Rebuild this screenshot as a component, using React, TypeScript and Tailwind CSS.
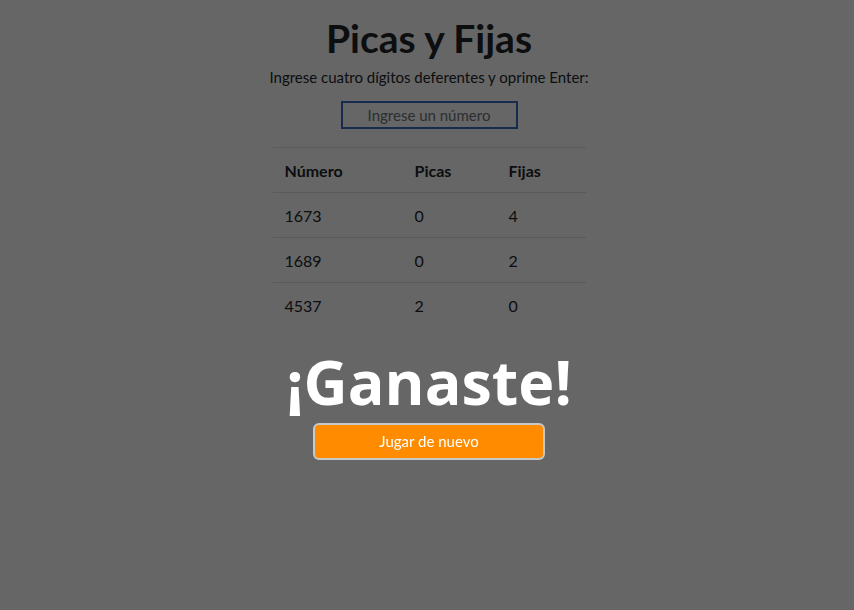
import React from "react";

interface Guess {
  numero: string;
  picas: number;
  fijas: number;
}

const guesses: Guess[] = [
  { numero: "1673", picas: 0, fijas: 4 },
  { numero: "1689", picas: 0, fijas: 2 },
  { numero: "4537", picas: 2, fijas: 0 },
];

const App: React.FC = () => {
  return (
    <div className="relative min-h-[610px] bg-white pl-[4px] font-['Lato','Liberation_Sans',sans-serif] text-[#212529]">
      <div className="flex flex-col items-center pt-[14px]">
        <h1 className="text-[39px] font-bold leading-[48px]">Picas y Fijas</h1>
        <p className="mt-[3px] text-[15px] leading-[24px]">
          Ingrese cuatro dígitos deferentes y oprime Enter:
        </p>
        <input
          type="text"
          placeholder="Ingrese un número"
          className="mt-[12px] h-[28px] w-[177px] border-2 border-[#3a6bc4] px-2 text-center text-[15px] outline-none placeholder:text-[#6c757d]"
        />

        {/* Table */}
        <table className="mt-[18px] w-[313px] border-collapse text-left text-[16px]">
          <thead>
            <tr className="border-t border-b border-[#dee2e6]">
              <th className="h-[45px] w-[130px] px-3 pt-[2px] font-bold">Número</th>
              <th className="h-[45px] w-[94px] px-3 pt-[2px] font-bold">Picas</th>
              <th className="h-[45px] px-3 pt-[2px] font-bold">Fijas</th>
            </tr>
          </thead>
          <tbody>
            {guesses.map((g, i) => (
              <tr
                key={g.numero}
                className={i < guesses.length - 1 ? "border-b border-[#dee2e6]" : ""}
              >
                <td className="h-[45px] px-3 pt-[2px]">{g.numero}</td>
                <td className="h-[45px] px-3 pt-[2px]">{g.picas}</td>
                <td className="h-[45px] px-3 pt-[2px]">{g.fijas}</td>
              </tr>
            ))}
          </tbody>
        </table>
      </div>

      {/* Win overlay */}
      <div className="fixed inset-0 flex flex-col items-center bg-black/60 pl-[4px] pt-[346px]">
        <h2 className="font-['Open_Sans','Lato',sans-serif] text-[61px] font-bold leading-[72px] text-white">
          ¡Ganaste!
        </h2>
        <button className="mt-[5px] h-[37px] w-[232px] rounded-md border-2 border-[#c8c8c8] bg-[#ff8c00] text-[15px] text-white">
          Jugar de nuevo
        </button>
      </div>
    </div>
  );
};

export default App;
